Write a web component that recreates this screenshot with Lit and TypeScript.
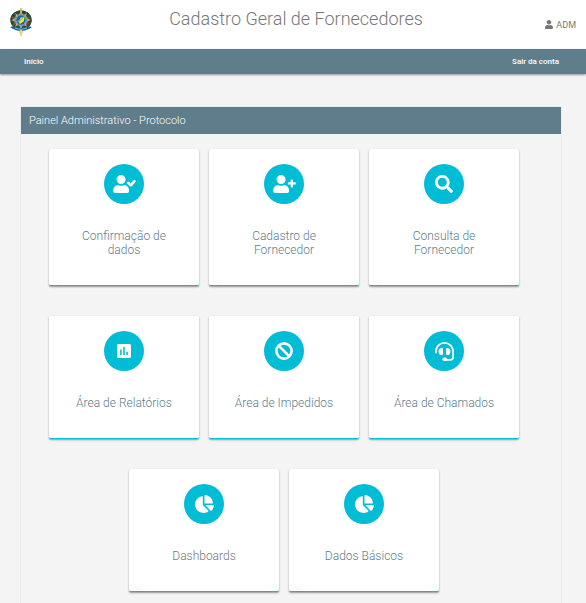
import { LitElement, html, svg, css, SVGTemplateResult } from "lit";
import { customElement, property } from "lit/decorators.js";

interface Shape {
  box: string;
  width: number;
  height: number;
  body: SVGTemplateResult;
}

const person = svg`<path d="M224 256c70.700 0 128-57.300 128-128S294.700 0 224 0 96 57.300 96 128s57.300 128 128 128zm89.600 32h-16.700c-22.200 10.200-46.900 16-72.900 16s-50.600-5.800-72.900-16h-16.700C60.200 288 0 348.200 0 422.400V464c0 26.500 21.500 48 48 48h352c26.500 0 48-21.500 48-48v-41.600c0-74.200-60.200-134.400-134.400-134.400z"/>`;

const shapes: Record<string, Shape> = {
  user: { box: "0 0 448 512", width: 8, height: 9, body: person },
  userCheck: {
    box: "0 0 640 512", width: 23, height: 18,
    body: svg`${person}<path d="M430 228l68 66 104-118" fill="none" stroke="currentColor" stroke-width="74" stroke-linecap="round" stroke-linejoin="round"/>`,
  },
  userPlus: {
    box: "0 0 640 512", width: 23, height: 18,
    body: svg`${person}<path d="M624 208h-64v-64c0-8.800-7.200-16-16-16h-32c-8.800 0-16 7.200-16 16v64h-64c-8.800 0-16 7.200-16 16v32c0 8.800 7.200 16 16 16h64v64c0 8.800 7.200 16 16 16h32c8.800 0 16-7.200 16-16v-64h64c8.800 0 16-7.200 16-16v-32c0-8.800-7.200-16-16-16z"/>`,
  },
  search: {
    box: "0 0 512 512", width: 18, height: 18,
    body: svg`<path d="M505 442.700L405.300 343c-4.500-4.500-10.600-7-17-7H372c27.600-35.300 44-79.700 44-128C416 93.100 322.900 0 208 0S0 93.100 0 208s93.100 208 208 208c48.300 0 92.700-16.400 128-44v16.300c0 6.400 2.500 12.500 7 17l99.700 99.700c9.400 9.400 24.600 9.400 33.900 0l28.300-28.300c9.400-9.400 9.400-24.600.1-34zM208 336c-70.700 0-128-57.200-128-128 0-70.700 57.200-128 128-128 70.700 0 128 57.200 128 128 0 70.700-57.200 128-128 128z"/>`,
  },
  report: {
    box: "3 3 18 18", width: 14, height: 14,
    body: svg`<path d="M19 3H5c-1.100 0-2 .9-2 2v14c0 1.100.9 2 2 2h14c1.100 0 2-.9 2-2V5c0-1.100-.9-2-2-2zM9 17H7v-7h2v7zm4 0h-2V7h2v10zm4 0h-2v-4h2v4z"/>`,
  },
  ban: {
    box: "0 0 18 18", width: 18, height: 18,
    body: svg`<g fill="none" stroke="currentColor" stroke-width="2.600"><circle cx="9" cy="9" r="7.600"/><path d="M3.700 3.700l10.600 10.600"/></g>`,
  },
  headset: {
    box: "0 0 512 512", width: 19, height: 19,
    body: svg`<path d="M24 280v-24C24 128 128 24 256 24s232 104 232 232v150c0 44-32 74-74 74H264" fill="none" stroke="currentColor" stroke-width="48" stroke-linecap="round" stroke-linejoin="round"/><rect x="200" y="420" width="124" height="92" rx="46"/><path d="M192 160h-16c-44 0-80 42-80 92v8c0 50 36 92 80 92h16c12 0 22-10 22-22V182c0-12-10-22-22-22zM320 160h16c44 0 80 42 80 92v8c0 50-36 92-80 92h-16c-12 0-22-10-22-22V182c0-12 10-22 22-22z"/>`,
  },
  pie: {
    box: "0 0 544 512", width: 19, height: 18,
    body: svg`<path d="M527.790 288H290.500l158.030 158.030c6.040 6.040 15.980 6.530 22.190.68 38.700-36.460 65.320-85.610 73.130-140.860 1.340-9.460-6.510-17.850-16.060-17.850zm-15.830-64.800C503.720 103.740 408.260 8.280 288.800.04 279.680-.59 272 7.100 272 16.240V240h223.770c9.140 0 16.820-7.680 16.190-16.800zM224 288V50.710c0-9.550-8.390-17.400-17.840-16.060C86.990 51.490-4.100 155.600.14 280.370 4.500 408.510 114.830 513.590 243.030 511.980c50.400-.63 96.970-16.870 135.260-44.030 7.900-5.600 8.420-17.230 1.570-24.080L224 288z"/>`,
  },
};

@customElement("app-icon")
class AppIcon extends LitElement {
  @property() name = "user";
  static styles = css`
    :host { display: inline-flex; }
    svg { fill: currentColor; display: block; }
  `;
  render() {
    const s = shapes[this.name];
    return html`<svg viewBox=${s.box} width=${s.width} height=${s.height} aria-hidden="true">${s.body}</svg>`;
  }
}

@customElement("state-emblem")
class StateEmblem extends LitElement {
  static styles = css`
    :host { display: inline-flex; }
    svg { display: block; }
  `;
  render() {
    return html`<svg width="22" height="28" viewBox="0 0 22 28" role="img" aria-label="Brasão">
      <ellipse cx="11" cy="12" rx="9" ry="8" fill="#6c8aa6" stroke="#1f5a2c" stroke-width="3.500"/>
      <ellipse cx="11" cy="12" rx="9.500" ry="8.500" fill="none" stroke="#4a2a20" stroke-width="2" stroke-dasharray="1.500 2.500"/>
      <path d="M3 15l2 2M19 15l-2 2M2 9l2 1M20 9l-2 1" stroke="#a83c32" stroke-width="1.500"/>
      <path d="M11 1l2 7 4-3-2 5 6 2-6 2 2 5-4-3-2 6-2-6-4 3 2-5-6-2 6-2-2-5 4 3z" fill="#e3a596"/>
      <path d="M11 4l1 4 3-2-1 4 4 2-4 2 1 4-3-2-1 4-1-4-3 2 1-4-4-2 4-2-1-4 3 2z" fill="#5f7fb5"/>
      <circle cx="11" cy="12" r="4.500" fill="#1767a7"/>
      <path d="M7 13l7-5 1 3-5 5z" fill="#55b947"/>
      <path d="M9 14l5-5v4l-4 3z" fill="#f2e544"/>
      <path d="M11 9l1 1-2 2z" fill="#fff"/>
      <path d="M11 0v5" stroke="#e0b05a" stroke-width="1.500"/>
      <path d="M0 19l4-1q7 4 14 0l4 1-3 2q-8 4-16 0z" fill="#18639a"/>
      <path d="M5 20q6 3 12 0" fill="none" stroke="#7fb9ba"/>
      <path d="M11 22v6M9 24h4" stroke="#f0cf86" stroke-width="2"/>
    </svg>`;
  }
}

interface Tile { icon: string; label: string; neutral?: boolean; }

const rows: Tile[][] = [
  [
    { icon: "userCheck", label: "Confirmação de dados" },
    { icon: "userPlus", label: "Cadastro de Fornecedor" },
    { icon: "search", label: "Consulta de Fornecedor" },
  ],
  [
    { icon: "report", label: "Área de Relatórios" },
    { icon: "ban", label: "Área de Impedidos" },
    { icon: "headset", label: "Área de Chamados" },
  ],
  [
    { icon: "pie", label: "Dashboards", neutral: true },
    { icon: "pie", label: "Dados Básicos" },
  ],
];

@customElement("app-root")
class AppRoot extends LitElement {
  static styles = css`
    :host {
      display: block;
      min-height: 100vh;
      background: #f4f4f4;
      color: #777;
      font-family: Roboto, "Liberation Sans", sans-serif;
    }
    a { color: inherit; text-decoration: none; }
    .header {
      display: grid;
      grid-template-columns: 1fr auto 1fr;
      height: 49px;
      padding: 0 10px;
      background: #fff;
    }
    .emblem { padding-top: 8px; }
    .title {
      margin: 0;
      padding: 8px 0 0 6px;
      font-size: 18px;
      line-height: 22px;
      font-weight: 300;
    }
    .account {
      display: flex;
      align-items: center;
      justify-content: flex-end;
      gap: 3px;
      font-size: 9px;
    }
    .nav {
      display: flex;
      justify-content: space-between;
      align-items: center;
      height: 25px;
      padding: 0 27px 0 24px;
      background: #607d8b;
      color: #fff;
      font-size: 8px;
      font-weight: 500;
      box-shadow: 0 1px 2px rgba(0, 0, 0, 0.4);
    }
    .panel {
      margin: 33px 25px 0 21px;
      box-shadow: 0 0 1px rgba(0, 0, 0, 0.2);
    }
    .heading {
      margin: 0;
      padding: 0 8px;
      background: #607d8b;
      color: #fff;
      font-size: 11px;
      line-height: 27px;
      font-weight: 300;
    }
    .body {
      display: flex;
      flex-direction: column;
      gap: 30px;
      padding: 15px 27px 15px 13px;
    }
    .row { display: flex; justify-content: center; gap: 10px; }
    .card {
      box-sizing: border-box;
      width: 150px;
      display: flex;
      flex-direction: column;
      align-items: center;
      gap: 25px;
      padding: 15px 20px 28px;
      background: #fff;
      border-bottom: 1px solid #00bcd4;
      border-radius: 2px;
      box-shadow: 0 1px 2px rgba(0, 0, 0, 0.4);
      color: #607d8b;
      font-size: 12px;
      line-height: 14px;
      font-weight: 300;
      text-align: center;
    }
    .neutral { color: #777; }
    .disc {
      display: flex;
      align-items: center;
      justify-content: center;
      width: 40px;
      height: 40px;
      border-radius: 50%;
      background: #00bcd4;
      color: #fff;
    }
  `;

  private tile(t: Tile) {
    return html`<a class="card ${t.neutral ? "neutral" : ""}" href="#">
      <span class="disc"><app-icon name=${t.icon}></app-icon></span>
      <span>${t.label}</span>
    </a>`;
  }

  render() {
    return html`
      <header class="header">
        <state-emblem class="emblem"></state-emblem>
        <h1 class="title">Cadastro Geral de Fornecedores</h1>
        <div class="account"><app-icon name="user"></app-icon><span>ADM</span></div>
      </header>
      <nav class="nav"><a href="#">Início</a><a href="#">Sair da conta</a></nav>
      <main class="panel">
        <h2 class="heading">Painel Administrativo - Protocolo</h2>
        <div class="body">
          ${rows.map((r) => html`<div class="row">${r.map((t) => this.tile(t))}</div>`)}
        </div>
      </main>`;
  }
}
